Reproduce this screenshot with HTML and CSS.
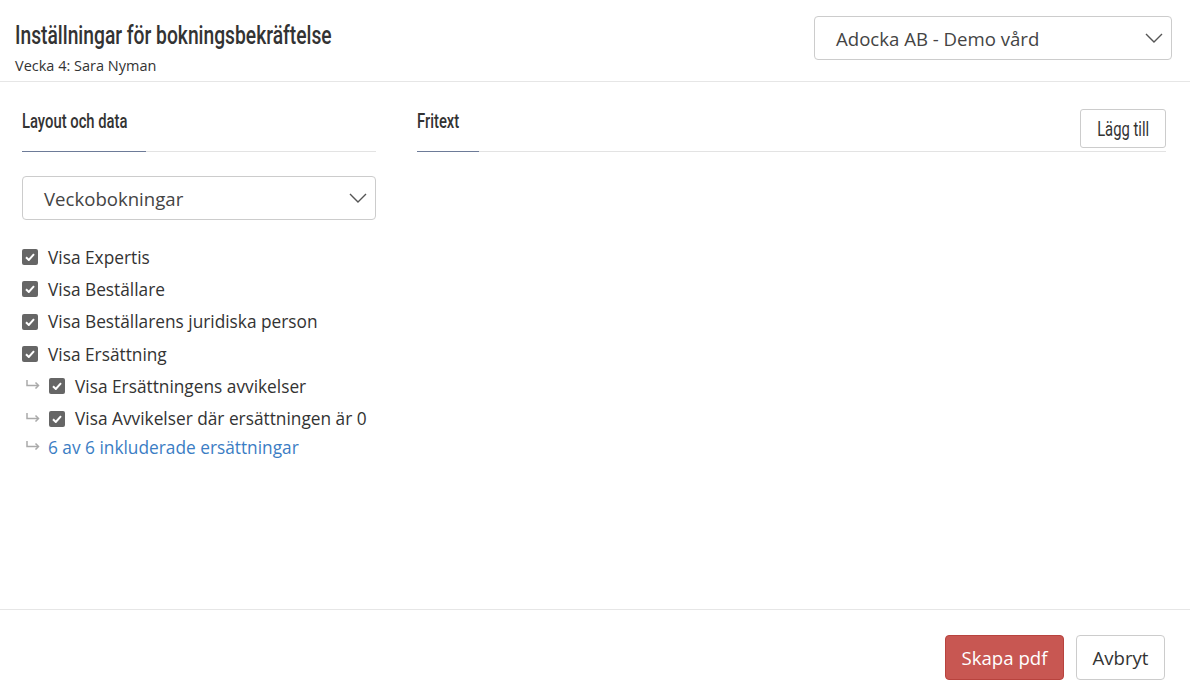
FILE: index.html
```html
<!DOCTYPE html>
<html lang="sv">
<head>
<meta charset="utf-8">
<title>Inställningar för bokningsbekräftelse</title>
<link rel="stylesheet" href="styles.css">
</head>
<body>
<div class="page">
  <header class="header">
    <div class="title-block">
      <h1 class="title"><span class="condensed">Inställningar för bokningsbekräftelse</span></h1>
      <div class="subtitle">Vecka 4: Sara Nyman</div>
    </div>
    <div class="select select-company">
      <span class="select-text">Adocka AB - Demo vård</span>
      <svg class="chevron" width="18" height="10" viewBox="0 0 18 10"><path d="M1 1 L9 9 L17 1" fill="none" stroke="#555" stroke-width="1.4"/></svg>
    </div>
  </header>

  <main class="main">
    <section class="col col-left">
      <div class="tab-bar">
        <div class="tab tab-layout"><span class="condensed">Layout och data</span></div>
      </div>
      <div class="select select-layout">
        <span class="select-text">Veckobokningar</span>
        <svg class="chevron" width="18" height="10" viewBox="0 0 18 10"><path d="M1 1 L9 9 L17 1" fill="none" stroke="#555" stroke-width="1.4"/></svg>
      </div>
      <ul class="options">
        <li class="option"><span class="cb"><svg width="10" height="8" viewBox="0 0 10 8"><path d="M1 4.2 L3.8 7 L9 1.2" fill="none" stroke="#fff" stroke-width="2"/></svg></span>Visa Expertis</li>
        <li class="option"><span class="cb"><svg width="10" height="8" viewBox="0 0 10 8"><path d="M1 4.2 L3.8 7 L9 1.2" fill="none" stroke="#fff" stroke-width="2"/></svg></span>Visa Beställare</li>
        <li class="option"><span class="cb"><svg width="10" height="8" viewBox="0 0 10 8"><path d="M1 4.2 L3.8 7 L9 1.2" fill="none" stroke="#fff" stroke-width="2"/></svg></span>Visa Beställarens juridiska person</li>
        <li class="option"><span class="cb"><svg width="10" height="8" viewBox="0 0 10 8"><path d="M1 4.2 L3.8 7 L9 1.2" fill="none" stroke="#fff" stroke-width="2"/></svg></span>Visa Ersättning</li>
        <li class="option sub"><svg class="arrow" width="14" height="9" viewBox="0 0 14 9"><path d="M1 0 V5.5 H12" fill="none" stroke="#aaa" stroke-width="1.5"/><path d="M9.5 2.5 L12.5 5.5 L9.5 8.5" fill="none" stroke="#aaa" stroke-width="1.5"/></svg><span class="cb"><svg width="10" height="8" viewBox="0 0 10 8"><path d="M1 4.2 L3.8 7 L9 1.2" fill="none" stroke="#fff" stroke-width="2"/></svg></span>Visa Ersättningens avvikelser</li>
        <li class="option sub"><svg class="arrow" width="14" height="9" viewBox="0 0 14 9"><path d="M1 0 V5.5 H12" fill="none" stroke="#aaa" stroke-width="1.5"/><path d="M9.5 2.5 L12.5 5.5 L9.5 8.5" fill="none" stroke="#aaa" stroke-width="1.5"/></svg><span class="cb"><svg width="10" height="8" viewBox="0 0 10 8"><path d="M1 4.2 L3.8 7 L9 1.2" fill="none" stroke="#fff" stroke-width="2"/></svg></span>Visa Avvikelser där ersättningen är 0</li>
        <li class="option sub link-row"><svg class="arrow arrow-link" width="14" height="9" viewBox="0 0 14 9"><path d="M1 0 V5.5 H12" fill="none" stroke="#aaa" stroke-width="1.5"/><path d="M9.5 2.5 L12.5 5.5 L9.5 8.5" fill="none" stroke="#aaa" stroke-width="1.5"/></svg><a class="link" href="#">6 av 6 inkluderade ersättningar</a></li>
      </ul>
    </section>
    <section class="col col-right">
      <div class="tab-bar">
        <div class="tab tab-fritext"><span class="condensed">Fritext</span></div>
        <button class="btn-add" type="button"><span class="condensed center">Lägg till</span></button>
      </div>
    </section>
  </main>

  <footer class="footer">
    <button class="btn btn-primary" type="button">Skapa pdf</button>
    <button class="btn btn-default" type="button">Avbryt</button>
  </footer>
</div>
</body>
</html>
```

FILE: styles.css
```css
* { box-sizing: border-box; }
html, body { margin: 0; padding: 0; }
body {
  font-family: "Open Sans", "Liberation Sans", sans-serif;
  color: #333;
  background: #fff;
}
.page {
  height: 696px;
  display: flex;
  flex-direction: column;
}
.condensed {
  display: inline-block;
  white-space: nowrap;
  font-family: Roboto, "Liberation Sans", sans-serif;
  font-weight: 500;
  transform: scaleX(0.74);
  transform-origin: left center;
}
.condensed.center { transform-origin: center center; }
.header {
  height: 82px;
  border-bottom: 1px solid #e6e6e6;
  display: flex;
  justify-content: space-between;
  align-items: flex-start;
  padding: 0 18px 0 15px;
}
.title-block { padding-top: 18px; }
.title {
  margin: 0;
  font-weight: normal;
  font-size: 26px;
  line-height: 32px;
  color: #333;
}
.subtitle {
  font-size: 14.5px;
  line-height: 18px;
  margin-top: 6px;
  color: #333;
}
.select {
  display: flex;
  align-items: center;
  justify-content: space-between;
  border: 1px solid #ccc;
  border-radius: 4px;
  height: 44px;
  padding: 0 8px 0 21px;
  font-size: 18.6px;
  color: #444;
  background: #fff;
}
.select-company {
  width: 358px;
  margin-top: 16px;
}
.chevron { display: block; }

.main {
  flex: 1;
  display: flex;
  gap: 41px;
  padding: 0 24px 0 22px;
}
.col-left { width: 354px; }
.col-right { flex: 1; }
.tab-bar {
  height: 70px;
  display: flex;
  align-items: flex-end;
  justify-content: space-between;
  border-bottom: 1px solid #e3e3e3;
}
.tab {
  font-size: 20px;
  line-height: 24px;
  color: #333;
  padding: 0 0 18px 0;
  margin-bottom: -1px;
  border-bottom: 1px solid #6d7b98;
}
.tab-layout { width: 124px; }
.tab-fritext { width: 62px; }
.btn-add {
  font-size: 20px;
  color: #333;
  background: #fff;
  border: 1px solid #ccc;
  border-radius: 3px;
  width: 86px;
  height: 39px;
  margin-bottom: 3px;
  padding: 0;
  display: flex;
  align-items: center;
  justify-content: center;
}
.btn-add .condensed { font-weight: 400; }
.select-layout {
  margin-top: 24px;
}
.options {
  list-style: none;
  margin: 21px 0 0;
  padding: 0;
}
.option {
  display: flex;
  align-items: center;
  height: 32.3px;
  font-size: 17.3px;
  color: #333;
}
.cb {
  width: 16px;
  height: 16px;
  border-radius: 2px;
  background: #666;
  display: flex;
  align-items: center;
  justify-content: center;
  margin-right: 10px;
  flex: none;
}
.cb svg { display: block; }
.arrow {
  display: block;
  flex: none;
  margin: -3px 9px 0 4px;
}
.arrow-link { margin-right: 8px; }
.link-row { height: 25px; }
.link {
  color: #3b7dc4;
  text-decoration: none;
}

.footer {
  height: 87px;
  border-top: 1px solid #e6e6e6;
  display: flex;
  justify-content: flex-end;
  align-items: flex-start;
  gap: 12px;
  padding: 25px 25px 0 0;
}
.btn {
  height: 45px;
  border-radius: 4px;
  font-family: "Open Sans", sans-serif;
  font-size: 18.6px;
  padding: 0;
}
.btn-primary {
  width: 119px;
  background: #c85752;
  border: 1px solid #b8433e;
  color: #fff;
}
.btn-default {
  width: 89px;
  background: #fff;
  border: 1px solid #ccc;
  color: #333;
}
```
